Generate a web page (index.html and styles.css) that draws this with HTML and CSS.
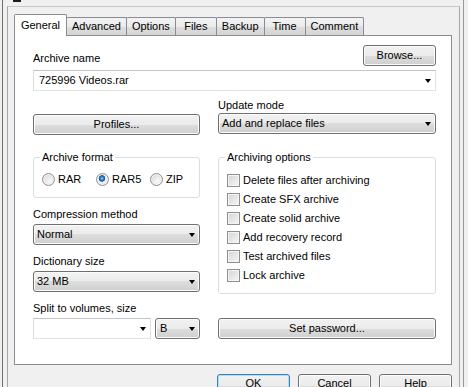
FILE: index.html
```html
<!DOCTYPE html>
<html lang="en">

<head>
    <meta charset="UTF-8" />
    <meta name="viewport" content="width=device-width, initial-scale=1.0" />
    <title>Archive name and parameters</title>
    <link rel="stylesheet" href="styles.css">
</head>

<body>
    <div class="window">
        <div class="titlebar"><div class="title-icon"></div></div>
        <div class="frame">
            <div class="tabs">
                <div class="tab active">General</div>
                <div class="tab">Advanced</div>
                <div class="tab">Options</div>
                <div class="tab">Files</div>
                <div class="tab">Backup</div>
                <div class="tab">Time</div>
                <div class="tab">Comment</div>
            </div>

            <div class="panel">
                <div class="name-row">
                    <span class="label">Archive name</span>
                    <button class="btn browse">Browse...</button>
                </div>
                <div class="combo edit name-combo"><span>725996 Videos.rar</span><i class="arrow"></i></div>

                <div class="columns">
                    <div class="col">
                        <button class="btn profiles">Profiles...</button>

                        <fieldset class="group format">
                            <legend>Archive format</legend>
                            <div class="radios">
                                <label class="radio"><span class="dot"></span>RAR</label>
                                <label class="radio"><span class="dot checked"></span>RAR5</label>
                                <label class="radio"><span class="dot"></span>ZIP</label>
                            </div>
                        </fieldset>

                        <div class="label field-label">Compression method</div>
                        <div class="combo"><span>Normal</span><i class="arrow"></i></div>

                        <div class="label field-label">Dictionary size</div>
                        <div class="combo"><span>32 MB</span><i class="arrow"></i></div>

                        <div class="label field-label">Split to volumes, size</div>
                        <div class="split">
                            <div class="combo edit size"><span></span><i class="arrow"></i></div>
                            <div class="combo unit"><span>B</span><i class="arrow"></i></div>
                        </div>
                    </div>

                    <div class="col">
                        <div class="label update-label">Update mode</div>
                        <div class="combo"><span>Add and replace files</span><i class="arrow"></i></div>

                        <fieldset class="group options">
                            <legend>Archiving options</legend>
                            <label class="check"><span class="box"></span>Delete files after archiving</label>
                            <label class="check"><span class="box"></span>Create SFX archive</label>
                            <label class="check"><span class="box"></span>Create solid archive</label>
                            <label class="check"><span class="box"></span>Add recovery record</label>
                            <label class="check"><span class="box"></span>Test archived files</label>
                            <label class="check"><span class="box"></span>Lock archive</label>
                        </fieldset>

                        <button class="btn password">Set password...</button>
                    </div>
                </div>
            </div>

            <div class="actions">
                <button class="btn default">OK</button>
                <button class="btn">Cancel</button>
                <button class="btn">Help</button>
            </div>
        </div>
    </div>
</body>

</html>
```

FILE: styles.css
```css
* {
    box-sizing: border-box;
}

body {
    margin: 0;
    height: 387px;
    overflow: hidden;
    background-color: #f0f0f0;
    font-family: "Liberation Sans", Arial, sans-serif;
    font-size: 11px;
    line-height: 15px;
    color: #000;
}

.window {
    width: 462px;
    height: 387px;
    margin-left: 2px;
    padding-left: 4px;
    border-left: 1px solid #6f6f6f;
    border-right: 1px solid #9a9a9a;
}

.titlebar {
    height: 6px;
}

.title-icon {
    width: 8px;
    height: 2px;
    margin-left: 6px;
    background-color: #1b1b1b;
}

.frame {
    width: 453px;
    height: 381px;
    padding: 7px 7px 0 6px;
    border: 1px solid #a8a8a8;
    border-top-color: #c9c9c9;
    border-bottom: 0;
}

/* tabs */
.tabs {
    display: flex;
    align-items: flex-end;
    height: 21px;
}

.tab {
    height: 18px;
    min-width: 42px;
    padding: 0 5px;
    margin-right: -1px;
    border: 1px solid #898c95;
    border-bottom: 0;
    border-radius: 2px 2px 0 0;
    background: linear-gradient(#f3f3f3, #ebebeb 50%, #dedede 50%, #d5d5d5);
    line-height: 17px;
    text-align: center;
}

.tab.active {
    position: relative;
    z-index: 1;
    height: 22px;
    min-width: 53px;
    margin-bottom: -1px;
    padding-top: 2px;
    background: #fff;
}

.panel {
    height: 330px;
    padding: 9px 15px 0 18px;
    border: 1px solid #898c95;
    background-color: #fff;
}

/* buttons and combos */
.btn {
    height: 21px;
    padding: 0;
    border: 1px solid #707070;
    border-radius: 3px;
    background: linear-gradient(#f2f2f2, #ebebeb 50%, #dddddd 50%, #cfcfcf);
    box-shadow: inset 0 0 0 1px #fcfcfc;
    font: inherit;
    color: #000;
}

.combo {
    display: flex;
    align-items: center;
    justify-content: space-between;
    height: 21px;
    padding: 0 4px 0 3px;
    border: 1px solid #707070;
    border-radius: 3px;
    background: linear-gradient(#f2f2f2, #ebebeb 50%, #dddddd 50%, #cfcfcf);
    box-shadow: inset 0 0 0 1px #fcfcfc;
}

.combo.edit {
    padding-left: 5px;
    border-color: #c4c4c4 #e2e2e2 #e2e2e2 #dcdcdc;
    border-radius: 0;
    background: #fff;
    box-shadow: none;
}

.arrow {
    width: 1px;
    height: 0;
    border-top: 4px solid #000;
    border-left: 3px solid transparent;
    border-right: 3px solid transparent;
}

.name-row {
    display: flex;
    justify-content: space-between;
    align-items: flex-end;
}

.browse {
    width: 73px;
}

.name-combo {
    margin-top: 4px;
}

.columns {
    display: grid;
    grid-template-columns: 167px 218px;
    column-gap: 18px;
}

.col {
    display: flex;
    flex-direction: column;
}

.profiles {
    margin-top: 23px;
}

.field-label {
    margin-top: 9px;
    margin-bottom: 2px;
}

.update-label {
    margin-top: 7px;
}

/* group boxes */
.group {
    margin: 0;
    min-width: 0;
    padding: 7px 8px 10px;
    border: 1px solid #d5dfe5;
    border-radius: 3px;
}

.group legend {
    margin-left: -2px;
    padding: 0 2px;
}

.format {
    margin-top: 15px;
}

.options {
    margin-top: 16px;
    padding-top: 6px;
    padding-bottom: 8px;
}

.radios {
    display: flex;
}

.radio {
    display: flex;
    flex: none;
    align-items: center;
    gap: 3px;
    width: 54px;
}

.dot {
    width: 13px;
    height: 13px;
    border: 1px solid #8e8f8f;
    border-radius: 50%;
    background: radial-gradient(circle at 60% 65%, #fafafa, #dcdcdc 70%);
    box-shadow: inset 0 0 0 1px #f4f4f4;
}

.dot.checked {
    background: radial-gradient(circle at 45% 40%, #9ad7f7 0, #2c8bd0 1.5px, #16519a 3px, #f4f4f4 3.6px, #e2e2e2 70%);
}

.check {
    display: flex;
    align-items: center;
    gap: 3px;
    height: 19px;
}

.box {
    width: 13px;
    height: 13px;
    border: 1px solid #8e8f8f;
    background: linear-gradient(135deg, #d4d4d4, #f7f7f7);
    box-shadow: inset 0 0 0 1px #f4f4f4;
}

.split {
    display: flex;
    gap: 4px;
}

.size {
    flex: 1;
}

.unit {
    width: 45px;
    padding-left: 4px;
}

.password {
    margin-top: 24px;
}

/* dialog buttons */
.actions {
    display: flex;
    justify-content: flex-end;
    gap: 8px;
    margin-top: 9px;
}

.actions .btn {
    width: 73px;
    height: 23px;
    padding-bottom: 4px;
}

.actions .default {
    border-color: #3c7fb1;
    box-shadow: inset 0 0 0 1px #a6e1fb;
}
```
